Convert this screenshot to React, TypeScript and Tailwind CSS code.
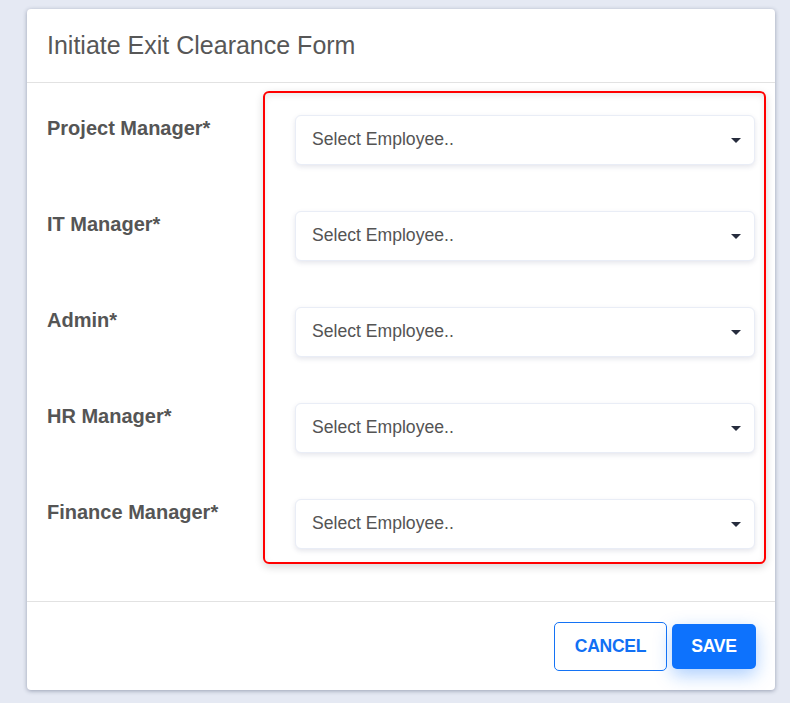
import React from "react";

const labels = ["Project Manager*", "IT Manager*", "Admin*", "HR Manager*", "Finance Manager*"];

function SelectBox() {
  return (
    <div className="h-[50px] w-full bg-white border border-[#e9edf6] rounded-[6px] shadow-[0_2px_5px_rgba(70,80,120,0.14)] flex items-center pl-[16px] pr-[13px]">
      <span className="flex-1 text-[17.6px] text-[#545454] leading-none">Select Employee..</span>
      <span className="w-0 h-0 border-x-[5px] border-x-transparent border-t-[5px] border-t-[#262c3d]" />
    </div>
  );
}

export default function App() {
  return (
    <div className="w-[790px] h-[703px] bg-[#e5e9f3] pt-[9px] pl-[27px] font-['Liberation_Sans',Arial,sans-serif] overflow-hidden">
      <div className="w-[748px] h-[681px] bg-white rounded-[4px] shadow-[0_1px_4px_rgba(60,70,100,0.45)] flex flex-col">
        <div className="h-[74px] shrink-0 border-b border-[#e2e2e2] flex items-center pl-[20px]">
          <h1 className="text-[25px] text-[#575757] leading-none">Initiate Exit Clearance Form</h1>
        </div>
        <div className="h-[518px] shrink-0 flex pt-[8px] pl-[20px] pr-[9px]">
          <div className="w-[216px] pt-[25px] flex flex-col">
            {labels.map((l) => (
              <div key={l} className="h-[96px] text-[20px] leading-[24px] font-bold text-[#555555]">
                {l}
              </div>
            ))}
          </div>
          <div className="w-[503px] h-[473px] border-2 border-[#ff0000] rounded-[6px] shadow-[0_3px_8px_rgba(0,0,0,0.16),inset_0_3px_6px_rgba(0,0,0,0.08)] pt-[22px] pl-[30px] pr-[9px] flex flex-col gap-[46px]">
            {labels.map((l) => (
              <SelectBox key={l} />
            ))}
          </div>
        </div>
        <div className="h-[89px] shrink-0 border-t border-[#e2e2e2] flex items-center justify-end pr-[19px] gap-[5px]">
          <button className="w-[113px] h-[49px] border border-[#1473f5] rounded-[5px] bg-white text-[#1170f4] text-[17.6px] font-bold tracking-[-0.3px]">
            CANCEL
          </button>
          <button className="w-[84px] h-[45px] rounded-[5px] bg-[#0d72fd] text-white text-[17.6px] font-bold tracking-[-0.3px] shadow-[0_6px_18px_rgba(13,114,253,0.35)]">
            SAVE
          </button>
        </div>
      </div>
    </div>
  );
}
